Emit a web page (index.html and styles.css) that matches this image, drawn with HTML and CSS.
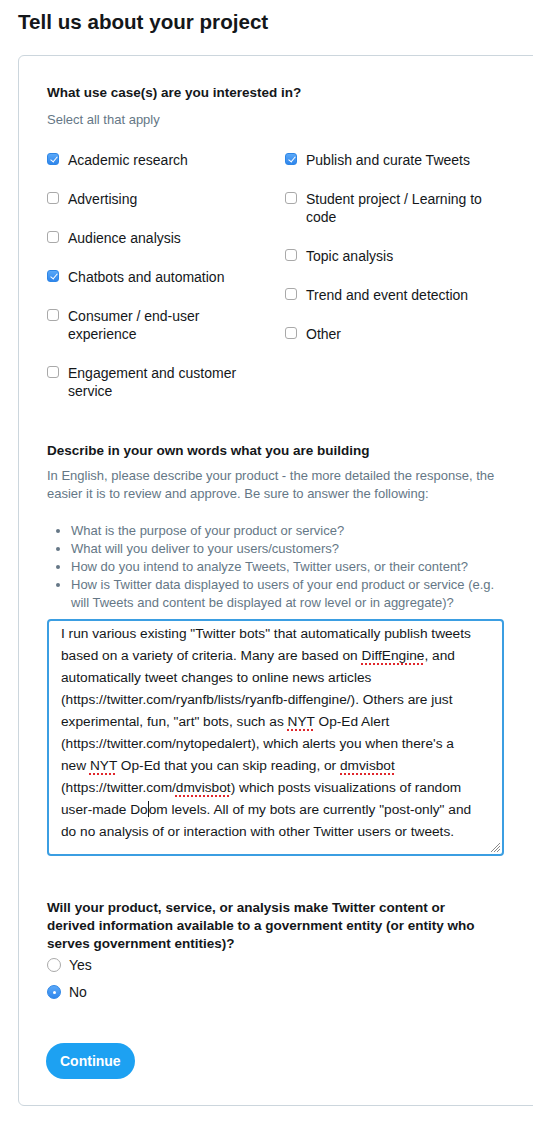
FILE: index.html
```html
<!DOCTYPE html>
<html lang="en">
<head>
<meta charset="utf-8">
<title>Tell us about your project</title>
<link rel="stylesheet" href="styles.css">
</head>
<body>
<main class="page">
  <h1 class="title">Tell us about your project</h1>
  <form class="card">
    <section class="question">
      <h2 class="q-title">What use case(s) are you interested in?</h2>
      <p class="hint">Select all that apply</p>
      <div class="options">
        <div class="col">
          <label class="opt"><span class="box checked"></span><span class="opt-text">Academic research</span></label>
          <label class="opt"><span class="box"></span><span class="opt-text">Advertising</span></label>
          <label class="opt"><span class="box"></span><span class="opt-text">Audience analysis</span></label>
          <label class="opt"><span class="box checked"></span><span class="opt-text">Chatbots and automation</span></label>
          <label class="opt"><span class="box"></span><span class="opt-text">Consumer / end-user experience</span></label>
          <label class="opt"><span class="box"></span><span class="opt-text">Engagement and customer service</span></label>
        </div>
        <div class="col">
          <label class="opt"><span class="box checked"></span><span class="opt-text">Publish and curate Tweets</span></label>
          <label class="opt"><span class="box"></span><span class="opt-text">Student project / Learning to code</span></label>
          <label class="opt"><span class="box"></span><span class="opt-text">Topic analysis</span></label>
          <label class="opt"><span class="box"></span><span class="opt-text">Trend and event detection</span></label>
          <label class="opt"><span class="box"></span><span class="opt-text">Other</span></label>
        </div>
      </div>
    </section>

    <section class="question describe">
      <h2 class="q-title">Describe in your own words what you are building</h2>
      <p class="para">In English, please describe your product - the more detailed the response, the easier it is to review and approve. Be sure to answer the following:</p>
      <ul class="bullets">
        <li>What is the purpose of your product or service?</li>
        <li>What will you deliver to your users/customers?</li>
        <li>How do you intend to analyze Tweets, Twitter users, or their content?</li>
        <li>How is Twitter data displayed to users of your end product or service (e.g. will Tweets and content be displayed at row level or in aggregate)?</li>
      </ul>
      <div class="textarea">
        <div class="ta-text">I run various existing "Twitter bots" that automatically publish tweets<br>based on a variety of criteria. Many are based on <span class="spell">DiffEngine</span>, and<br>automatically tweet changes to online news articles<br>(https://twitter.com/ryanfb/lists/ryanfb-diffengine/). Others are just<br>experimental, fun, "art" bots, such as <span class="spell">NYT</span> Op-Ed Alert<br>(https://twitter.com/nytopedalert), which alerts you when there's a<br>new <span class="spell">NYT</span> Op-Ed that you can skip reading, or <span class="spell">dmvisbot</span><br>(https://twitter.com/<span class="spell">dmvisbot</span>) which posts visualizations of random<br>user-made Do<span class="caret"></span>om levels. All of my bots are currently "post-only" and<br>do no analysis of or interaction with other Twitter users or tweets.</div>
        <svg class="grip" width="11" height="11" viewBox="0 0 11 11" aria-hidden="true">
          <path d="M10 1 L1 10 M10 4 L4 10 M10 7 L7 10" stroke="#8a8a8a" stroke-width="1" fill="none"/>
        </svg>
      </div>
    </section>

    <section class="question gov">
      <h2 class="q-title gov-title">Will your product, service, or analysis make Twitter content or derived information available to a government entity (or entity who serves government entities)?</h2>
      <label class="radio-opt"><span class="radio"></span><span>Yes</span></label>
      <label class="radio-opt"><span class="radio on"></span><span>No</span></label>
    </section>

    <button type="button" class="btn">Continue</button>
  </form>
</main>
</body>
</html>
```

FILE: styles.css
```css
html, body {
  margin: 0;
  padding: 0;
  background: #ffffff;
  overflow: hidden;
}

body {
  font-family: "Liberation Sans", Arial, Helvetica, sans-serif;
  color: #14171a;
  font-size: 14px;
}

.page {
  padding: 9px 0 0 18px;
}

.title {
  margin: 0;
  font-size: 20.6px;
  line-height: 25px;
  font-weight: 700;
  color: #14171a;
}

.card {
  margin-top: 21px;
  width: 560px;
  border: 1px solid #ccd6dd;
  border-radius: 6px;
  padding: 28px 0 26px 28px;
  box-sizing: border-box;
}

.question {
  width: 457px;
}

.q-title {
  margin: 0;
  font-size: 13.5px;
  line-height: 18px;
  font-weight: 700;
  color: #14171a;
}

.gov-title {
  max-width: 440px;
}

.hint {
  margin: 9px 0 0;
  font-size: 13px;
  line-height: 18px;
  color: #657786;
}

.options {
  display: grid;
  grid-template-columns: 238px 1fr;
  margin-top: 22px;
}

.col {
  display: flex;
  flex-direction: column;
  gap: 21px;
}

.col:first-child {
  padding-right: 22px;
}

.opt {
  display: flex;
  align-items: flex-start;
  gap: 9px;
  font-size: 14px;
  line-height: 18px;
  color: #14171a;
}

.box {
  flex: none;
  width: 12px;
  height: 12px;
  margin-top: 2px;
  box-sizing: border-box;
  border: 1px solid #a9a9a9;
  border-radius: 3px;
  background: #fff;
  position: relative;
}

.box.checked {
  border-color: #2e86e6;
  background: linear-gradient(#5aa8f8, #2f86ec);
}

.box.checked::after {
  content: "";
  position: absolute;
  left: 3.5px;
  top: 1px;
  width: 3px;
  height: 6px;
  border: solid #fff;
  border-width: 0 1.6px 1.6px 0;
  transform: rotate(40deg);
}

.describe {
  margin-top: 42px;
}

.para {
  margin: 7px 0 0;
  font-size: 13px;
  line-height: 18px;
  color: #657786;
}

.bullets {
  margin: 19px 0 0;
  padding-left: 24px;
  font-size: 13px;
  line-height: 18px;
  color: #657786;
}

.textarea {
  position: relative;
  margin-top: 7px;
  height: 237px;
  box-sizing: border-box;
  border: 2px solid #3b9ee2;
  border-radius: 4px;
  padding: 2px 12px 0;
}

.ta-text {
  font-size: 13.7px;
  line-height: 22px;
  color: #14171a;
  white-space: nowrap;
}

.spell {
  text-decoration: underline dotted #e0262b;
  text-decoration-thickness: 2px;
  text-underline-offset: 3px;
}

.caret {
  display: inline-block;
  width: 1px;
  height: 16px;
  background: #14171a;
  vertical-align: -3px;
}

.grip {
  position: absolute;
  right: 1px;
  bottom: 1px;
}

.gov {
  margin-top: 43px;
}

.radio-opt {
  display: flex;
  align-items: center;
  gap: 8px;
  font-size: 14px;
  line-height: 18px;
  margin-top: 3px;
}

.radio-opt + .radio-opt {
  margin-top: 9px;
}

.radio {
  width: 14px;
  height: 14px;
  box-sizing: border-box;
  border: 1px solid #a9a9a9;
  border-radius: 50%;
  background: #fff;
  position: relative;
}

.radio.on {
  border-color: #2e86e6;
  background: linear-gradient(#5aa8f8, #2f86ec);
}

.radio.on::after {
  content: "";
  position: absolute;
  left: 4.5px;
  top: 4.5px;
  width: 3px;
  height: 3px;
  border-radius: 50%;
  background: #fff;
}

.btn {
  display: block;
  margin-top: 42px;
  margin-left: -1px;
  height: 36px;
  padding: 0 14px;
  border: none;
  border-radius: 18px;
  background: #1da1f2;
  color: #fff;
  font-family: "Liberation Sans", Arial, sans-serif;
  font-size: 14px;
  font-weight: 700;
}
```
